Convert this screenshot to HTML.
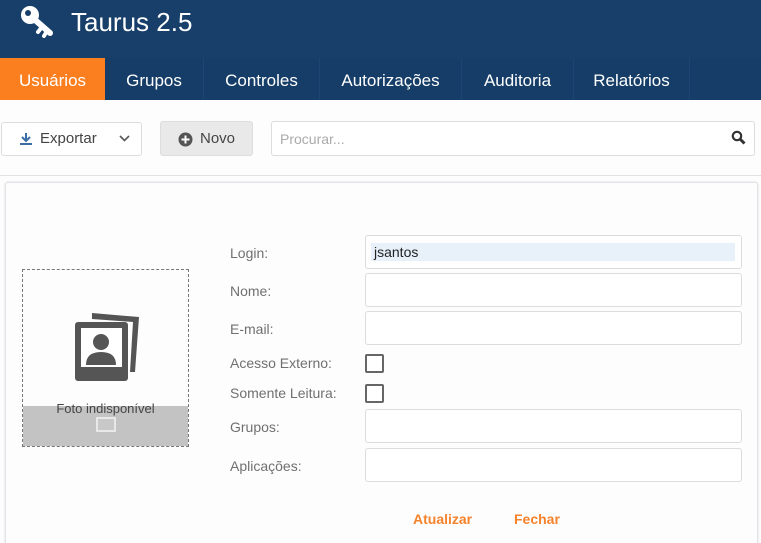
<!DOCTYPE html>
<html><head><meta charset="utf-8"><style>
*{box-sizing:border-box;margin:0;padding:0}
html,body{width:761px;height:543px;overflow:hidden}
body{background:#fdfdfd;font-family:"Liberation Sans",Arial,sans-serif;position:relative}
.hdr{position:absolute;left:0;top:0;width:761px;height:58px;background:#173f69}
.nav{position:absolute;left:0;top:58px;width:761px;height:42px;background:#153d67}
.tab{position:absolute;top:0;height:42px;line-height:46px;color:#fff;font-size:17px;text-align:center;border-right:1px solid #1c4672}
.abs{position:absolute}
.btn{position:absolute;border:1px solid #ddd;border-radius:3px;background:#fff;font-size:15px;color:#444}
.inp{position:absolute;left:365px;width:377px;height:34px;border:1px solid #dcdcdc;border-radius:3px;background:#fff}
.lbl{position:absolute;left:230px;font-size:14px;color:#707070}
.cb{position:absolute;left:365px;width:19px;height:19px;border:2px solid #666;border-radius:2px;background:#fff}
</style></head><body>
<div class="hdr">
<svg class="abs" style="left:20px;top:5px" width="36" height="34" viewBox="0 0 36 34"><circle cx="10" cy="10" r="9" fill="#fff"/><circle cx="8" cy="8" r="3" fill="#173f69"/><path d="M14 14 L30 28" stroke="#fff" stroke-width="6" stroke-linecap="round"/><path d="M22 22 l-4 5 M27 26 l-3 5" stroke="#fff" stroke-width="4" stroke-linecap="round"/></svg>
<div class="abs" style="left:71px;top:7px;font-size:26px;color:#fff">Taurus 2.5</div>
</div>
<div class="nav">
<div class="tab" style="left:0;width:105px;background:#fb7f1f;border:none">Usuários</div>
<div class="tab" style="left:105px;width:99px">Grupos</div>
<div class="tab" style="left:204px;width:116px">Controles</div>
<div class="tab" style="left:320px;width:142px">Autorizações</div>
<div class="tab" style="left:462px;width:112px">Auditoria</div>
<div class="tab" style="left:574px;width:116px">Relatórios</div>
</div>
<div class="btn" style="left:1px;top:122px;width:141px;height:34px">
<svg class="abs" style="left:17px;top:9px" width="14" height="14" viewBox="0 0 14 14"><path d="M7 1v8M3 5l4 4 4-4" stroke="#3a6ea5" stroke-width="2" fill="none"/><path d="M1 12h12" stroke="#3a6ea5" stroke-width="2"/></svg>
<span class="abs" style="left:38px;top:7px">Exportar</span>
<svg class="abs" style="left:117px;top:12px" width="11" height="8" viewBox="0 0 11 8"><path d="M1 1l4.5 4.5L10 1" stroke="#555" stroke-width="1.6" fill="none"/></svg>
</div>
<div class="btn" style="left:160px;top:121px;width:93px;height:35px;background:#e9e9e9">
<svg class="abs" style="left:17px;top:10px" width="15" height="15" viewBox="0 0 15 15"><circle cx="7.5" cy="7.5" r="7" fill="#555"/><path d="M7.5 3.5v8M3.5 7.5h8" stroke="#fff" stroke-width="2"/></svg>
<span class="abs" style="left:39px;top:8px">Novo</span>
</div>
<div class="btn" style="left:271px;top:121px;width:484px;height:35px">
<span class="abs" style="left:8px;top:9px;color:#aaa;font-size:14px">Procurar...</span>
<svg class="abs" style="left:459px;top:8px" width="15" height="15" viewBox="0 0 15 15"><circle cx="6" cy="6" r="4.2" stroke="#333" stroke-width="2.2" fill="none"/><path d="M9 9l4.5 4.5" stroke="#333" stroke-width="3"/></svg>
</div>
<div class="abs" style="left:0;top:175px;width:761px;height:1px;background:#e2e2e2"></div>
<div class="abs" style="left:5px;top:182px;width:753px;height:380px;border:1px solid #e4e2e8;border-radius:3px;background:#fdfdfd;box-shadow:0 0 2px #ddd"></div>
<div class="abs" style="left:22px;top:269px;width:167px;height:178px;border:1px dashed #777;background:#fdfdfd">
<div class="abs" style="left:0;top:136px;width:165px;height:40px;background:#c3c3c3"></div>
<svg class="abs" style="left:49px;top:40px" width="72" height="72" viewBox="0 0 72 72"><path d="M20 3 L67 7 L63 62 L58 62 L61 12 L20 9z" fill="#555"/><rect x="3" y="12" width="53" height="59" rx="3" fill="#555"/><rect x="9" y="18" width="41" height="39" fill="#fff"/><circle cx="29" cy="32" r="8" fill="#555"/><path d="M14 55 Q14 42 29 42 Q44 42 44 55z" fill="#555"/></svg>
<div class="abs" style="left:0;top:131px;width:165px;text-align:center;font-size:13px;color:#444">Foto indisponível</div>
<div class="abs" style="left:73px;top:147px;width:20px;height:15px;border:2px solid #e8e8e8;background:#c8c8c8"></div>
</div>
<div class="lbl" style="top:245px">Login:</div>
<div class="inp" style="top:235px"><div class="abs" style="left:5px;top:7px;width:364px;height:18px;background:#e8f0fa"></div><span class="abs" style="left:8px;top:8px;font-size:14px;color:#222">jsantos</span></div>
<div class="lbl" style="top:283px">Nome:</div>
<div class="inp" style="top:273px"></div>
<div class="lbl" style="top:321px">E-mail:</div>
<div class="inp" style="top:311px"></div>
<div class="lbl" style="top:355px">Acesso Externo:</div>
<div class="cb" style="top:354px"></div>
<div class="lbl" style="top:385px">Somente Leitura:</div>
<div class="cb" style="top:384px"></div>
<div class="lbl" style="top:419px">Grupos:</div>
<div class="inp" style="top:409px"></div>
<div class="lbl" style="top:458px">Aplicações:</div>
<div class="inp" style="top:448px"></div>
<div class="abs" style="left:413px;top:511px;font-size:14px;font-weight:bold;color:#f6822a">Atualizar</div>
<div class="abs" style="left:514px;top:511px;font-size:14px;font-weight:bold;color:#f6822a">Fechar</div>
</body></html>
